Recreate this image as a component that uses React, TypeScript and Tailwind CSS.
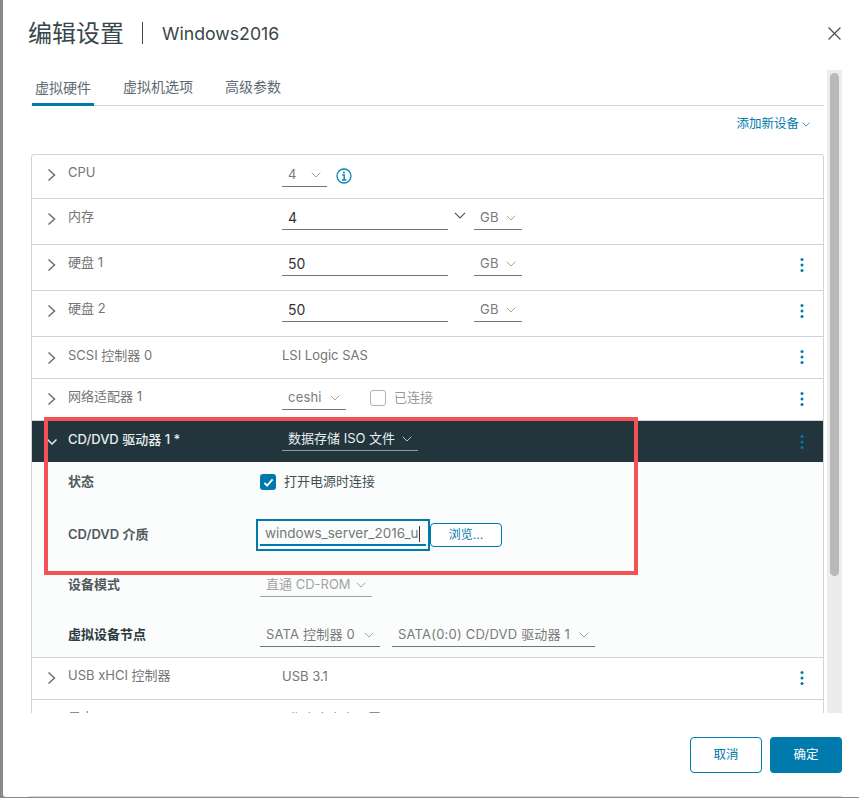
import React from "react";

const FONT = "font-['Inter','Noto_Sans_CJK_SC',sans-serif]";

function Chev({ className = "" }: { className?: string }) {
  return (
    <svg viewBox="0 0 10 6" className={className} fill="none" stroke="currentColor" strokeWidth="1">
      <path d="M0.7 0.7 L5 5 L9.3 0.7" />
    </svg>
  );
}

function Arrow({ open = false }: { open?: boolean }) {
  return (
    <svg viewBox="0 0 10 14" className="w-[10px] h-[14px] shrink-0" fill="none" stroke="currentColor" strokeWidth="1.5">
      {open ? <path d="M0.5 4.5 L5 9 L9.5 4.5" /> : <path d="M1.5 1.5 L7.5 7 L1.5 12.5" />}
    </svg>
  );
}

function Dots() {
  return (
    <svg viewBox="0 0 4 16" className="w-[4px] h-[16px] text-[#0079ad]" fill="currentColor">
      <circle cx="2" cy="2.5" r="1.5" />
      <circle cx="2" cy="8" r="1.5" />
      <circle cx="2" cy="13.5" r="1.5" />
    </svg>
  );
}

function Select({ text, width, dark = false, muted = false }: { text: string; width: string; dark?: boolean; muted?: boolean }) {
  const tone = dark
    ? "border-[#8a9aa0] text-[#e8eef0]"
    : muted
      ? "border-[#9aa5a9] text-[#a3a3a3]"
      : "border-[#66797f] text-[#7a7a7a] tracking-[0.2px]";
  return (
    <div className={`${width} h-[24px] flex items-center justify-between pl-[6px] pr-[6px] border-b text-[13px] whitespace-nowrap ${tone}`}>
      <span>{text}</span>
      <Chev className={`w-[10px] h-[6px] shrink-0 ${dark ? "text-[#b8c4c8]" : "text-[#a5a5a5]"}`} />
    </div>
  );
}

function NumberInput({ value }: { value: string }) {
  return (
    <div className="w-[166px] h-[24px] flex items-center pl-[6px] border-b border-[#66797f] text-[14px] text-[#333]">{value}</div>
  );
}

function Row({
  label,
  height,
  children,
  menu = true,
  pt,
  menuPb = "pb-[2px]",
}: {
  label: string;
  height: string;
  children?: React.ReactNode;
  menu?: boolean;
  pt: string;
  menuPb?: string;
}) {
  return (
    <div className={`${height} flex border-b border-[#ccd6da] pl-[15px] pr-[19px] text-[#6f6f6f]`}>
      <div className={`${pt} flex items-start w-[235px] shrink-0`}>
        <div className="w-[21px] pt-[5px]"><Arrow /></div>
        <span className="text-[13px] leading-[18px] text-[#757575]">{label}</span>
      </div>
      <div className="flex-1 flex items-start gap-[26px] pt-[7px]">{children}</div>
      {menu && <div className={`flex items-center ${menuPb}`}><Dots /></div>}
    </div>
  );
}

function FormRow({ label, height, bold = false, children }: { label: string; height: string; bold?: boolean; children: React.ReactNode }) {
  return (
    <div className={`${height} flex items-center pl-[36px]`}>
      <span className={`w-[192px] text-[13px] font-semibold ${bold ? "text-[#2a3a40]" : "text-[#505a5e]"}`}>{label}</span>
      {children}
    </div>
  );
}

export default function App() {
  return (
    <div className={`w-[859px] h-[798px] flex overflow-hidden bg-[#8a8a8a] ${FONT} relative`}>
      <div className="w-[3px] shrink-0" />
      <div className="flex-1 h-[797px] bg-white flex flex-col rounded-bl-[3px] pl-[25px] pr-[17px]">
        <div className="h-[70px] shrink-0 flex items-start pt-[17px]">
          <h1 className="text-[24px] leading-[34px] text-[#37474c] font-normal">编辑设置</h1>
          <div className="w-px h-[22px] bg-[#314a53] ml-[18px] mt-[5px]" />
          <span className="ml-[19px] text-[17.7px] leading-[34px] text-[#37474c]">Windows2016</span>
          <svg viewBox="0 0 12 12" className="w-[13px] h-[13px] ml-auto mr-[1px] mt-[10px] text-[#46585e]" fill="none" stroke="currentColor" strokeWidth="1.2">
            <path d="M0.5 0.5 L11.5 11.5 M11.5 0.5 L0.5 11.5" />
          </svg>
        </div>

        <div className="h-[643px] flex overflow-hidden shrink-0">
          <div className="w-[796px] shrink-0 pl-[3px]">
            <div className="h-[36px] flex items-end border-b border-[#ccd6da] text-[14px] text-[#5a6a70]">
              <div className="h-[35px] w-[62px] ml-[1px] text-center leading-[34px] border-b-[3px] border-[#0079ad] -mb-px">虚拟硬件</div>
              <div className="h-[35px] ml-[29px] leading-[34px]">虚拟机选项</div>
              <div className="h-[35px] ml-[32px] leading-[34px]">高级参数</div>
            </div>
            <div className="h-[48px] flex justify-end items-start pt-[9px] pr-[14px] text-[12.5px] leading-[18px] text-[#0079ad] gap-[3px]">
              <span>添加新设备</span>
              <Chev className="w-[8px] h-[5px] mt-[7px]" />
            </div>

            <div className="border border-[#ccd6da] rounded-t-[3px] w-[793px] h-[700px]">
              <Row label="CPU" height="h-[44px]" menu={false} pt="pt-[8px]">
                <div className="flex items-center gap-[9px] pt-[1px]">
                  <Select text="4" width="w-[45px]" />
                  <svg viewBox="0 0 16 16" className="w-[16px] h-[16px] mt-[2px] text-[#0b86b8]" fill="none" stroke="currentColor" strokeWidth="1.3">
                    <circle cx="8" cy="8" r="7" />
                    <path d="M6.2 7 H8.2 V12 M6 12 H10.4" strokeWidth="1.4" />
                    <circle cx="7.9" cy="4.4" r="1" fill="currentColor" stroke="none" />
                  </svg>
                </div>
              </Row>
              <Row label="内存" height="h-[46px]" menu={false} pt="pt-[8px]">
                <div className="flex">
                  <NumberInput value="4" />
                  <Chev className="w-[12px] h-[7px] mt-[6px] ml-[6px] text-[#555]" />
                  <div className="ml-[8px]"><Select text="GB" width="w-[48px]" /></div>
                </div>
              </Row>
              {["硬盘 1", "硬盘 2"].map((d) => (
                <Row key={d} label={d} height="h-[46px]" pt="pt-[8px]" menuPb="pb-[6px]">
                  <div className="flex gap-[26px]">
                    <NumberInput value="50" />
                    <Select text="GB" width="w-[48px]" />
                  </div>
                </Row>
              ))}
              <Row label="SCSI 控制器 0" height="h-[42px]" pt="pt-[9px]">
                <span className="text-[13px] leading-[18px] pt-[2px] text-[#757575]">LSI Logic SAS</span>
              </Row>
              <Row label="网络适配器 1" height="h-[42px]" pt="pt-[8px]">
                <div className="flex items-center gap-[24px]">
                  <Select text="ceshi" width="w-[64px]" />
                  <div className="flex items-center gap-[8px] text-[13px] text-[#9a9a9a]">
                    <div className="w-[16px] h-[16px] rounded-[3px] border border-[#a9b5b9] bg-white" />
                    <span>已连接</span>
                  </div>
                </div>
              </Row>
              <div className="h-[41px] flex bg-[#22343c] pl-[15px] text-[#e8eef0]">
                <div className="w-[235px] flex items-center pb-[4px]">
                  <div className="w-[21px] flex pt-[4px]"><Arrow open /></div>
                  <span className="text-[13px] font-medium">CD/DVD 驱动器 1 *</span>
                </div>
                <div className="pt-[6px]"><Select text="数据存储 ISO 文件" width="w-[136px]" dark /></div>
                <div className="ml-auto pr-[19px] flex items-center"><Dots /></div>
              </div>
              <div className="h-[196px] bg-[#fbfdfd] border-b border-[#ccd6da] pt-[3px]">
                <FormRow label="状态" height="h-[34px]">
                  <div className="w-[16px] h-[16px] rounded-[3px] bg-[#0079ad] flex items-center justify-center">
                    <svg viewBox="0 0 12 12" className="w-[11px] h-[11px] text-white" fill="none" stroke="currentColor" strokeWidth="2"><path d="M1.5 6.5 L4.5 9.5 L10.5 2.5" /></svg>
                  </div>
                  <span className="ml-[8px] text-[13px] text-[#444f53]">打开电源时连接</span>
                </FormRow>
                <div className="h-[19px]" />
                <FormRow label="CD/DVD 介质" height="h-[34px]">
                  <div className="-ml-[4px] w-[174px] h-[32px] border-2 border-[#0079ad] px-[2px] flex flex-col">
                    <div className="h-[23px] pl-[5px] flex items-end text-[13.5px] leading-[21px] text-[#777] whitespace-nowrap">windows_server_2016_u<span className="w-px h-[16px] mb-[2px] bg-[#333]" /></div>
                    <div className="h-[2px] bg-[#0079ad]" />
                  </div>
                  <button className="w-[72px] h-[24px] border border-[#0079ad] rounded-[4px] bg-white text-[12px] text-[#0079ad]">浏览...</button>
                </FormRow>
                <div className="h-[16px]" />
                <FormRow label="设备模式" height="h-[34px]">
                  <Select text="直通 CD-ROM" width="w-[112px]" muted />
                </FormRow>
                <div className="h-[16px]" />
                <FormRow label="虚拟设备节点" height="h-[34px]" bold>
                  <div className="flex gap-[12px]">
                    <Select text="SATA 控制器 0" width="w-[120px]" />
                    <Select text="SATA(0:0) CD/DVD 驱动器 1" width="w-[203px]" />
                  </div>
                </FormRow>
              </div>
              <Row label="USB xHCI 控制器" height="h-[42px]" pt="pt-[8px]">
                <span className="text-[13px] leading-[18px] pt-[2px] text-[#757575]">USB 3.1</span>
              </Row>
              <Row label="显卡" height="h-[42px]" menu={false} pt="pt-[8px]">
                <span className="text-[13px] leading-[18px] pt-[2px] pl-[8px] text-[#757575]">指定自定义设置</span>
              </Row>
            </div>
          </div>
          <div className="ml-[3px] w-[15px] h-full bg-[#ececec] pt-[3px] flex justify-center">
            <div className="w-[9px] h-[503px] rounded-[5px] bg-[#b9b9b9]" />
          </div>
        </div>

        <div className="flex-1 flex justify-end items-start pt-[24px] gap-[8px] border-b border-[#d5dcdf]">
          <button className="w-[72px] h-[36px] rounded-[4px] border border-[#0079ad] bg-white text-[12.5px] text-[#0079ad]">取消</button>
          <button className="w-[72px] h-[36px] rounded-[4px] bg-[#0079ad] text-[12.5px] text-white">确定</button>
        </div>
      </div>
      <div className="absolute left-[44px] top-[417px] w-[594px] h-[158px] border-[4px] border-[#f55257] pointer-events-none" />
    </div>
  );
}
